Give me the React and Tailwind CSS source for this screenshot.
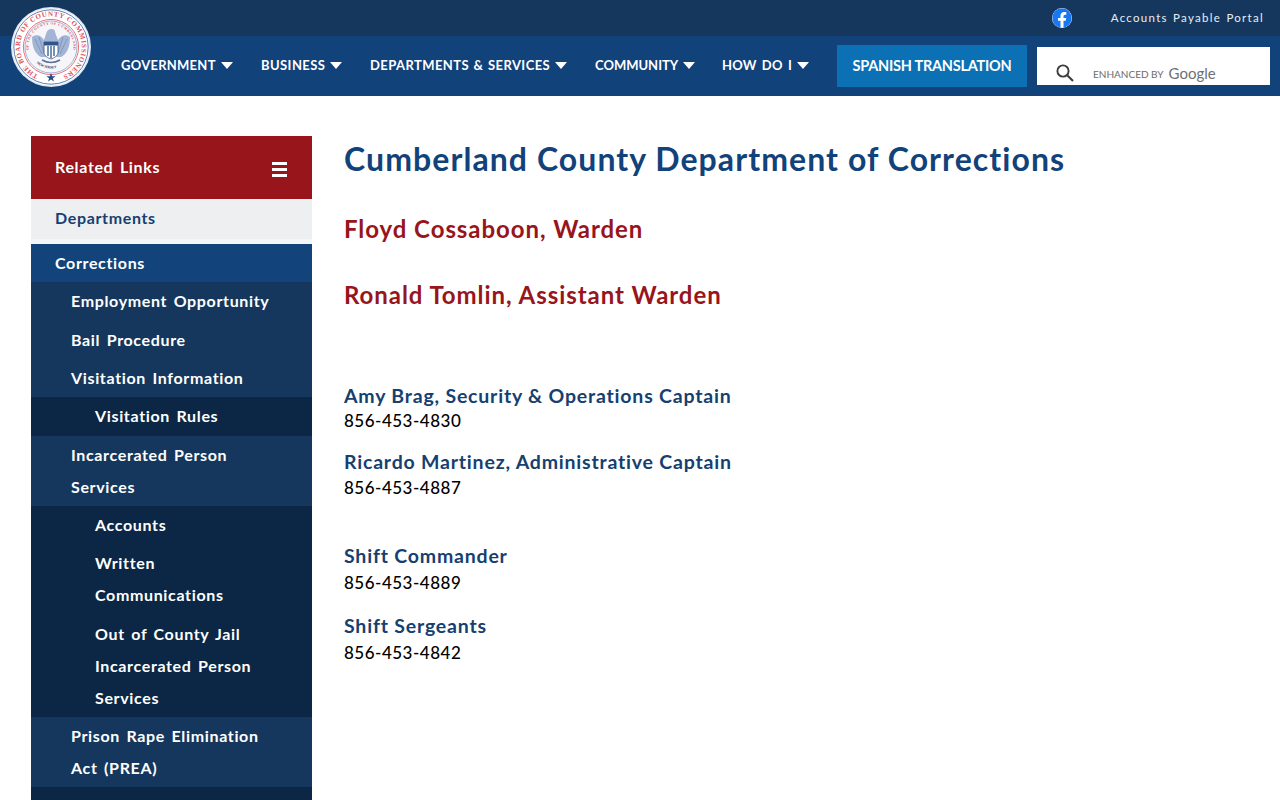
import { FaFacebook } from "react-icons/fa";

const NAV_ITEMS = [
  { label: "GOVERNMENT", width: "w-[140px]", text: "tracking-[0.26px]" },
  { label: "BUSINESS", width: "w-[109px]", text: "tracking-[0.42px]" },
  { label: "DEPARTMENTS & SERVICES", width: "w-[225px]", text: "tracking-[0.42px] [word-spacing:1px]" },
  { label: "COMMUNITY", width: "w-[127px]", text: "tracking-[0px]" },
  { label: "HOW DO I", width: "w-[100px]", text: "tracking-[0.2px] [word-spacing:2px]" },
];

const SIDE_ITEMS = [
  { label: "Employment Opportunity", level: 1 },
  { label: "Bail Procedure", level: 1 },
  { label: "Visitation Information", level: 1 },
  { label: "Visitation Rules", level: 2 },
  { label: "Incarcerated Person Services", level: 1 },
  { label: "Accounts", level: 2 },
  { label: "Written Communications", level: 2 },
  { label: "Out of County Jail Incarcerated Person Services", level: 2 },
  { label: "Prison Rape Elimination Act (PREA)", level: 1 },
  { label: "\u00a0", level: 2 },
];

const CONTACTS = [
  { name: "Amy Brag, Security & Operations Captain", phone: "856-453-4830", spacing: "mt-[73px]", gap: "" },
  { name: "Ricardo Martinez, Administrative Captain", phone: "856-453-4887", spacing: "mt-[16px]", gap: "mt-[1px]" },
  { name: "Shift Commander", phone: "856-453-4889", spacing: "mt-[43px]", gap: "mt-[2px]" },
  { name: "Shift Sergeants", phone: "856-453-4842", spacing: "mt-[18px]", gap: "mt-[2px]" },
];

const Seal = () => (
  <svg viewBox="0 0 80 80" className="absolute left-[11px] top-[7px] h-[80px] w-[80px]">
    <defs>
      <path id="outerRing" d="M40 70.8 a30.8 30.8 0 1 1 0 -61.6 a30.8 30.8 0 1 1 0 61.6" />
      <path id="innerRing" d="M40 62.5 a22.5 22.5 0 1 1 0 -45 a22.5 22.5 0 1 1 0 45" />
      <path id="lowerRing" d="M19 47 a22.5 22.5 0 0 0 42 0" />
    </defs>
    <circle cx="40" cy="40" r="40" fill="#dfe6f0" />
    <circle cx="40" cy="40" r="38.6" fill="#fff" />
    <circle cx="40" cy="40" r="37.2" fill="none" stroke="#5f83b8" strokeWidth="1" />
    <circle cx="40" cy="40" r="27.6" fill="none" stroke="#e2606a" strokeWidth="0.9" />
    <circle cx="40" cy="40" r="26" fill="#f6f6fa" stroke="#7d97c2" strokeWidth="0.7" />
    <text fill="#e2505b" fontSize="7" fontWeight="700" fontFamily="'Liberation Serif', serif">
      <textPath href="#outerRing" startOffset="13" textLength="168" lengthAdjust="spacing">
        THE BOARD OF COUNTY COMMISSIONERS
      </textPath>
    </text>
    <text fill="#d9545e" fontSize="3.6" fontWeight="700" fontFamily="'Liberation Serif', serif">
      <textPath href="#innerRing" startOffset="32" textLength="76" lengthAdjust="spacing">
        OF THE COUNTY OF CUMBERLAND
      </textPath>
    </text>
    <text fill="#27406f" fontSize="3.6" fontWeight="700" fontFamily="'Liberation Serif', serif">
      <textPath href="#lowerRing" startOffset="11" textLength="22" lengthAdjust="spacing">
        NEW JERSEY
      </textPath>
    </text>
    <path
      d="M21 30 C25 27 30 28 33 33 L35 27 C36 23 38 22 41 22 C44 22 44 25 45 28 L47 33 C50 28 55 27 59 30 C59 40 56 47 50 50 L30 50 C24 47 21 40 21 30 Z"
      fill="#a3b5d4"
    />
    <path d="M24 32 L31 47 M28 30 L33 46 M56 32 L49 47 M52 30 L47 46" stroke="#6f88b4" strokeWidth="0.7" />
    <path d="M33 35 H47 V45 C47 49 43 51 40 52 C37 51 33 49 33 45 Z" fill="#fff" stroke="#31548c" strokeWidth="0.8" />
    <path d="M33 35 H47 V38.5 H33 Z" fill="#31548c" />
    <path d="M37 39 V49 M40 39 V51 M43 39 V49" stroke="#31548c" strokeWidth="1.3" />
    <path d="M31 53 Q40 58 49 53" fill="none" stroke="#5d7099" strokeWidth="1.6" />
    <path d="M40 66 L41.2 69.2 L44.6 69.2 L41.9 71.2 L42.9 74.4 L40 72.5 L37.1 74.4 L38.1 71.2 L35.4 69.2 L38.8 69.2 Z" fill="#1f4f8f" />
  </svg>
);

const Caret = () => (
  <svg viewBox="0 0 12 7" className="-mt-[2px] h-[7px] w-[12px]">
    <path d="M0 0 H12 L6 7 Z" fill="#fff" />
  </svg>
);

const Header = () => (
  <header className="relative h-[96px]">
    <div className="flex h-[36px] items-center justify-end bg-[#16375d] pr-4">
      <FaFacebook className="mr-[39px] rounded-full bg-white text-[20px] text-[#1877f2]" />
      <a className="-mt-[1px] text-[11.5px] tracking-[1.29px] text-[#e8edf3] [word-spacing:1px]">Accounts Payable Portal</a>
    </div>
    <div className="flex h-[60px] items-center bg-[#12427a] pl-[121px]">
      <nav className="flex w-[716px] items-center">
        {NAV_ITEMS.map((item) => (
          <a key={item.label} className={`flex items-center gap-[5px] text-[13px] font-bold text-white ${item.width} ${item.text}`}>
            {item.label} <Caret />
          </a>
        ))}
      </nav>
      <button className="h-[42px] w-[190px] bg-[#0b71b4] text-[14.5px] font-bold tracking-[-0.25px] text-white">
        SPANISH TRANSLATION
      </button>
      <div className="ml-[10px] -mt-[1px] flex h-[38px] w-[233px] items-end bg-white pb-[2px] pl-[18px]">
        <svg viewBox="0 0 20 20" className="h-[20px] w-[20px]">
          <circle cx="8" cy="8" r="5.6" fill="none" stroke="#3d3d3d" strokeWidth="1.9" />
          <path d="M12.2 12.2 L18 18" stroke="#3d3d3d" strokeWidth="2.1" />
        </svg>
        <span className="mb-[1px] ml-[18px] text-[10px] text-[#6b6b6b]">ENHANCED BY</span>
        <span className="ml-[5px] text-[15px] leading-[20px] text-[#707070]">Google</span>
      </div>
    </div>
    <Seal />
  </header>
);

const Sidebar = () => (
  <aside className="w-[281px] shrink-0 text-[16px] font-bold leading-[32px] tracking-[0.65px] [word-spacing:2px]">
    <div className="flex h-[63px] items-center justify-between bg-[#97151b] pl-6 pr-[25px] text-white">
      <span className="-mt-[1px]">Related Links</span>
      <div className="mt-[3px] flex w-[15px] flex-col gap-[3px]">
        <span className="h-[3px] bg-white" />
        <span className="h-[3px] bg-white" />
        <span className="h-[3px] bg-white" />
      </div>
    </div>
    <div className="border-b-[5px] border-[#f4f5f7] bg-[#eeeff1] pb-[5px] pl-6 pt-[3px] text-[#16406f]">Departments</div>
    <div className="bg-[#12437a] pb-[3px] pl-6 pt-[3px] text-white">Corrections</div>
    {SIDE_ITEMS.map((item, idx) => (
      <div
        key={idx}
        className={
          item.level === 1
            ? "bg-[#16375d] py-[3.2px] pl-10 pr-[30px] text-white"
            : "bg-[#0b2745] py-[3.2px] pl-16 pr-[30px] text-white"
        }
      >
        {item.label}
      </div>
    ))}
  </aside>
);

export default function App() {
  return (
    <div className="h-[800px] overflow-hidden bg-white font-['Lato',sans-serif]">
      <Header />
      <main className="flex pl-[31px] pt-10">
        <Sidebar />
        <section className="pl-[32px]">
          <h1 className="mt-[3px] text-[32px] font-bold leading-[40px] tracking-[1.07px] text-[#12427a]">
            Cumberland County Department of Corrections
          </h1>
          <h2 className="mt-[35px] text-[24px] font-bold leading-[30px] tracking-[0.94px] text-[#97151b]">Floyd Cossaboon, Warden</h2>
          <h2 className="mt-[36px] text-[24px] font-bold leading-[30px] tracking-[0.94px] text-[#97151b]">Ronald Tomlin, Assistant Warden</h2>
          {CONTACTS.map((c) => (
            <div key={c.name} className={c.spacing}>
              <h3 className="text-[19.5px] font-bold leading-[26px] tracking-[0.8px] text-[#16406f]">{c.name}</h3>
              <p className={`text-[17px] font-medium leading-[24px] tracking-[0.5px] text-black ${c.gap}`}>{c.phone}</p>
            </div>
          ))}
        </section>
      </main>
    </div>
  );
}
